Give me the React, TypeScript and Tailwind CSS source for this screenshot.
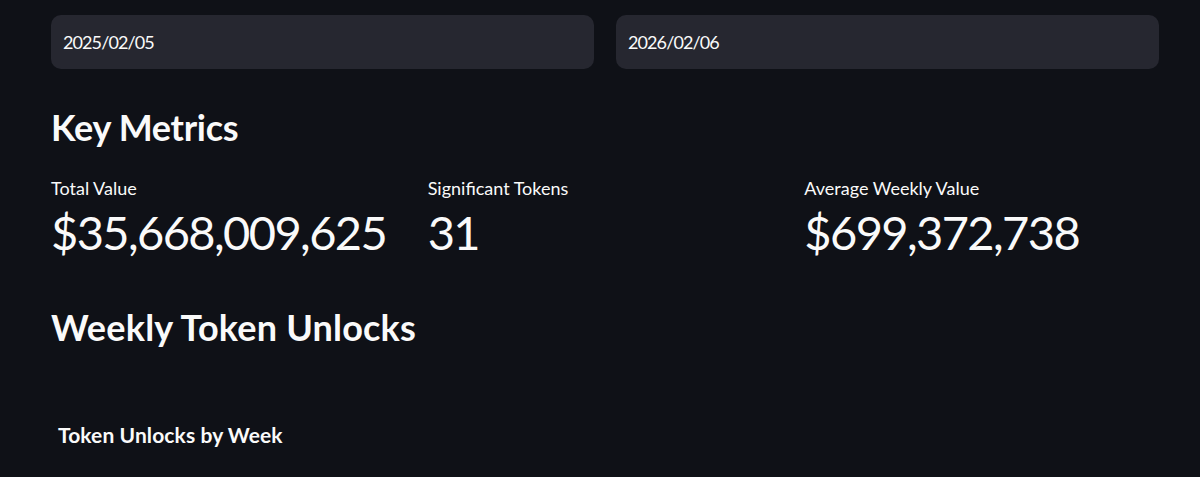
import React from 'react';

const metrics = [
  { label: 'Total Value', value: '$35,668,009,625' },
  { label: 'Significant Tokens', value: '31' },
  { label: 'Average Weekly Value', value: '$699,372,738' },
];

export default function App() {
  return (
    <div className="min-h-screen w-full bg-[#0f1117] text-[#fafafa] font-['Lato','Noto_Sans',sans-serif]">
      <div className="pl-[51px] pr-[41px] pt-[15px]">
        {/* date range */}
        <div className="grid grid-cols-2 gap-[22px]">
          {['2025/02/05', '2026/02/06'].map((d) => (
            <div key={d} className="h-[54px] rounded-[10px] bg-[#262730] flex items-center px-3 text-[18px] tracking-[-0.9px]">
              {d}
            </div>
          ))}
        </div>

        <h3 className="mt-[40px] text-[36px] leading-[36px] font-bold tracking-[-0.3px]">Key Metrics</h3>

        <div className="grid grid-cols-3 gap-[22px] mt-[34px]">
          {metrics.map((m) => (
            <div key={m.label}>
              <div className="text-[18px] leading-[18px]">{m.label}</div>
              <div className="mt-[12px] text-[47px] leading-[47px] tracking-[-1.6px]">{m.value}</div>
            </div>
          ))}
        </div>

        <h3 className="mt-[53px] text-[36px] leading-[36px] font-bold tracking-[0.2px]">Weekly Token Unlocks</h3>

        <div className="mt-[80px] pl-[7px] text-[21px] leading-[20px] font-bold tracking-[0.1px]">Token Unlocks by Week</div>
      </div>
    </div>
  );
}
